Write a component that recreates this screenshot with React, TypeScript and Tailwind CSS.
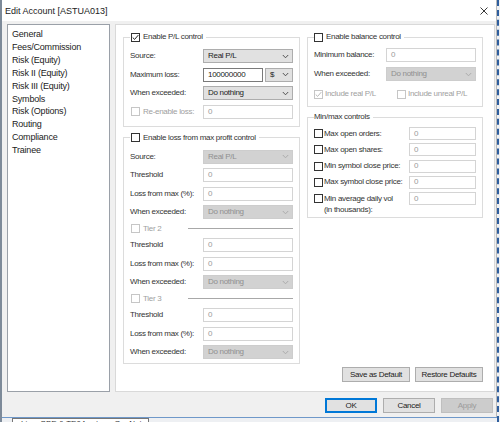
import React from 'react';

const Check = ({ checked = false, disabled = false }: { checked?: boolean; disabled?: boolean }) => (
  <span
    className={`flex-none w-[9px] h-[9px] border bg-white flex items-center justify-center ${
      disabled ? 'border-[#c6c6c6]' : 'border-[#333333]'
    }`}
  >
    {checked && (
      <svg width="7" height="7" viewBox="0 0 7 7">
        <path d="M0.7 3.5 L2.6 5.4 L6.3 1.1" fill="none" stroke={disabled ? '#b8b8b8' : '#222'} strokeWidth="1" />
      </svg>
    )}
  </span>
);

const Chevron = ({ disabled = false }: { disabled?: boolean }) => (
  <svg width="7" height="5" viewBox="0 0 7 5" className="flex-none">
    <path d="M0.8 1 L3.5 3.8 L6.2 1" fill="none" stroke={disabled ? '#a8a8a8' : '#444'} strokeWidth="0.9" />
  </svg>
);

const Field = ({ value, disabled = false, h = 'h-[14px]' }: { value: string; disabled?: boolean; h?: string }) => (
  <div
    className={`${h} flex-1 min-w-0 border bg-white flex items-center px-[4px] ${
      disabled ? 'border-[#d4d4d4] text-[#9a9a9a]' : 'border-[#7a7a7a] text-[#222]'
    }`}
  >
    {value}
  </div>
);

const Select = ({ value, disabled = false, className = 'flex-1' }: { value: string; disabled?: boolean; className?: string }) => (
  <div
    className={`${className} h-[14px] min-w-0 border flex items-center justify-between pl-[4px] pr-[3px] ${
      disabled ? 'bg-[#d2d2d2] border-[#cdcdcd] text-[#8f8f8f]' : 'bg-[#e1e1e1] border-[#adadad] text-[#222]'
    }`}
  >
    <span>{value}</span>
    <Chevron disabled={disabled} />
  </div>
);

const Row = ({ label, children, disabled = false, lw = 'w-[73px]' }: { label: string; children: React.ReactNode; disabled?: boolean; lw?: string }) => (
  <div className="h-[14px] flex items-center">
    <span className={`${lw} flex-none ${disabled ? 'text-[#a0a0a0]' : 'text-[#333]'}`}>{label}</span>
    {children}
  </div>
);

const Tier = ({ label }: { label: string }) => (
  <div className="h-[10px] flex items-center pl-[1px]">
    <Check disabled />
    <span className="w-[48px] flex-none pl-[3px] text-[#a0a0a0]">{label}</span>
    <div className="flex-1 h-px bg-[#a8a8a8]" />
  </div>
);

const Btn = ({ label, w, disabled = false, primary = false }: { label: string; w: string; disabled?: boolean; primary?: boolean }) => (
  <div
    className={`${w} h-[15px] flex items-center justify-center border ${
      disabled
        ? 'bg-[#cccccc] border-[#bfbfbf] text-[#9b9b9b]'
        : primary
        ? 'bg-[#e1e1e1] border-[#0078d7] border-2 text-[#222]'
        : 'bg-[#e1e1e1] border-[#adadad] text-[#222]'
    }`}
  >
    {label}
  </div>
);

const NAV = ['General', 'Fees/Commission', 'Risk (Equity)', 'Risk II (Equity)', 'Risk III (Equity)', 'Symbols', 'Risk (Options)', 'Routing', 'Compliance', 'Trainee'];

const MINMAX = ['Max open orders:', 'Max open shares:', 'Min symbol close price:', 'Max symbol close price:'];

export default function App() {
  return (
    <div className="w-[500px] h-[422px] flex overflow-hidden bg-[#eef0f3] font-['Liberation_Sans',Arial,sans-serif] font-normal text-[8px] tracking-[-0.3px] leading-[10px] text-[#333]">
      <div className="w-[497px] h-[422px] flex flex-col border-l-2 border-[#7d8a99]">
        <div className="flex flex-col bg-[#f0f0f0] border-r border-[#b9b9b9]">
          {/* title bar */}
          <div className="h-[21px] bg-white flex items-center justify-between pl-[3px] pr-[8px]">
            <span className="text-[9px] tracking-normal text-[#222]">Edit Account [ASTUA013]</span>
            <svg width="8" height="8" viewBox="0 0 8 8">
              <path d="M0.5 0.5 L7.5 7.5 M7.5 0.5 L0.5 7.5" stroke="#222" strokeWidth="0.9" />
            </svg>
          </div>

          <div className="flex pt-[3px] pl-[5px] pr-[1px] gap-[5px]">
            {/* nav list */}
            <div className="w-[103px] h-[368px] bg-white border border-[#9aa0a8] pt-[3px] pl-[4px] flex flex-col text-[9px] tracking-[-0.2px] leading-[12.9px] text-[#222]">
              {NAV.map((n) => (
                <span key={n}>{n}</span>
              ))}
            </div>

            {/* page */}
            <div className="w-[380px] h-[368px] bg-white border border-[#d9d9d9] flex flex-col pl-[7px] pr-[11px] pt-[7px] pb-[9px]">
              <div className="flex gap-[7px]">
                {/* left column */}
                <div className="w-[177px] flex flex-col gap-[6px]">
                  <fieldset className="border border-[#dcdcdc] px-[6px] pt-[7px] pb-[7px] flex flex-col gap-[4.5px]">
                    <legend className="h-[10px] flex items-center gap-[3px] pl-[1px] pr-[3px]">
                      <Check checked />
                      <span>Enable P/L control</span>
                    </legend>
                    <Row label="Source:">
                      <Select value="Real P/L" />
                    </Row>
                    <Row label="Maximum loss:">
                      <Field value="100000000" />
                      <Select value="$" className="w-[28px] ml-[2px] flex-none" />
                    </Row>
                    <Row label="When exceeded:">
                      <Select value="Do nothing" />
                    </Row>
                    <div className="h-[14px] flex items-center">
                      <div className="w-[73px] flex-none flex items-center gap-[3px] pl-[1px] text-[#a0a0a0]">
                        <Check disabled />
                        <span>Re-enable loss:</span>
                      </div>
                      <Field value="0" disabled />
                    </div>
                  </fieldset>

                  <fieldset className="border border-[#dcdcdc] px-[6px] pt-[7px] pb-[4px] flex flex-col gap-[4.5px]">
                    <legend className="h-[10px] flex items-center gap-[3px] pl-[1px] pr-[3px]">
                      <Check />
                      <span>Enable loss from max profit control</span>
                    </legend>
                    <Row label="Source:">
                      <Select value="Real P/L" disabled />
                    </Row>
                    <Row label="Threshold">
                      <Field value="0" disabled />
                    </Row>
                    <Row label="Loss from max (%):">
                      <Field value="0" disabled />
                    </Row>
                    <Row label="When exceeded:">
                      <Select value="Do nothing" disabled />
                    </Row>
                    <Tier label="Tier 2" />
                    <Row label="Threshold">
                      <Field value="0" disabled />
                    </Row>
                    <Row label="Loss from max (%):">
                      <Field value="0" disabled />
                    </Row>
                    <Row label="When exceeded:">
                      <Select value="Do nothing" disabled />
                    </Row>
                    <Tier label="Tier 3" />
                    <Row label="Threshold">
                      <Field value="0" disabled />
                    </Row>
                    <Row label="Loss from max (%):">
                      <Field value="0" disabled />
                    </Row>
                    <Row label="When exceeded:">
                      <Select value="Do nothing" disabled />
                    </Row>
                  </fieldset>
                </div>

                {/* right column */}
                <div className="w-[176px] flex flex-col gap-[5px]">
                  <fieldset className="border border-[#dcdcdc] px-[6px] pt-[6px] pb-[7px] flex flex-col gap-[5px]">
                    <legend className="h-[10px] flex items-center gap-[3px] pl-[0px] pr-[3px]">
                      <Check />
                      <span>Enable balance control</span>
                    </legend>
                    <Row label="Minimum balance:" lw="w-[72px]">
                      <Field value="0" disabled />
                    </Row>
                    <Row label="When exceeded:" lw="w-[72px]">
                      <Select value="Do nothing" disabled />
                    </Row>
                    <div className="h-[10px] mt-[3px] flex items-center text-[#a0a0a0]">
                      <div className="w-[83px] flex items-center gap-[2px]">
                        <Check checked disabled />
                        <span>Include real P/L</span>
                      </div>
                      <div className="flex items-center gap-[2px]">
                        <Check disabled />
                        <span>Include unreal P/L</span>
                      </div>
                    </div>
                  </fieldset>

                  <fieldset className="border border-[#dcdcdc] px-[6px] pt-[5px] pb-[2px] flex flex-col gap-[3.3px]">
                    <legend className="h-[10px] flex items-center pr-[3px]">
                      <span>Min/max controls</span>
                    </legend>
                    {MINMAX.map((m) => (
                      <div key={m} className="h-[13px] flex items-center">
                        <div className="w-[95px] flex-none flex items-center gap-[1px]">
                          <Check />
                          <span>{m}</span>
                        </div>
                        <Field value="0" disabled h="h-[13px]" />
                      </div>
                    ))}
                    <div className="flex items-start">
                      <div className="w-[95px] flex-none flex items-start gap-[1px]">
                        <div className="h-[13px] flex items-center">
                          <Check />
                        </div>
                        <span className="leading-[11px] pt-[1px]">
                          Min average daily vol
                          <br />
                          (in thousands):
                        </span>
                      </div>
                      <Field value="0" disabled h="h-[13px]" />
                    </div>
                  </fieldset>
                </div>
              </div>

              <div className="mt-auto flex justify-end gap-[5px]">
                <Btn label="Save as Default" w="w-[68px]" />
                <Btn label="Restore Defaults" w="w-[68px]" />
              </div>
            </div>
          </div>

          {/* dialog buttons */}
          <div className="flex justify-end gap-[6px] pt-[6px] pb-[4px] pr-[3px]">
            <Btn label="OK" w="w-[52px]" primary />
            <Btn label="Cancel" w="w-[52px]" />
            <Btn label="Apply" w="w-[52px]" disabled />
          </div>
        </div>

        {/* taskbar preview */}
        <div className="flex-1 border-t border-[#6f98c9] bg-[#eef0f3] pl-[10px]">
          <div className="w-[137px] h-full bg-white border border-b-0 border-[#767676] pl-[8px] text-[8px] tracking-normal leading-[9px] text-[#333] overflow-hidden">
            Lime SBE &amp; TE04 setup - OneNote
          </div>
        </div>
      </div>
      <div className="w-[3px] h-full border-l-2 border-dashed border-[#2e5e9e]" />
    </div>
  );
}
